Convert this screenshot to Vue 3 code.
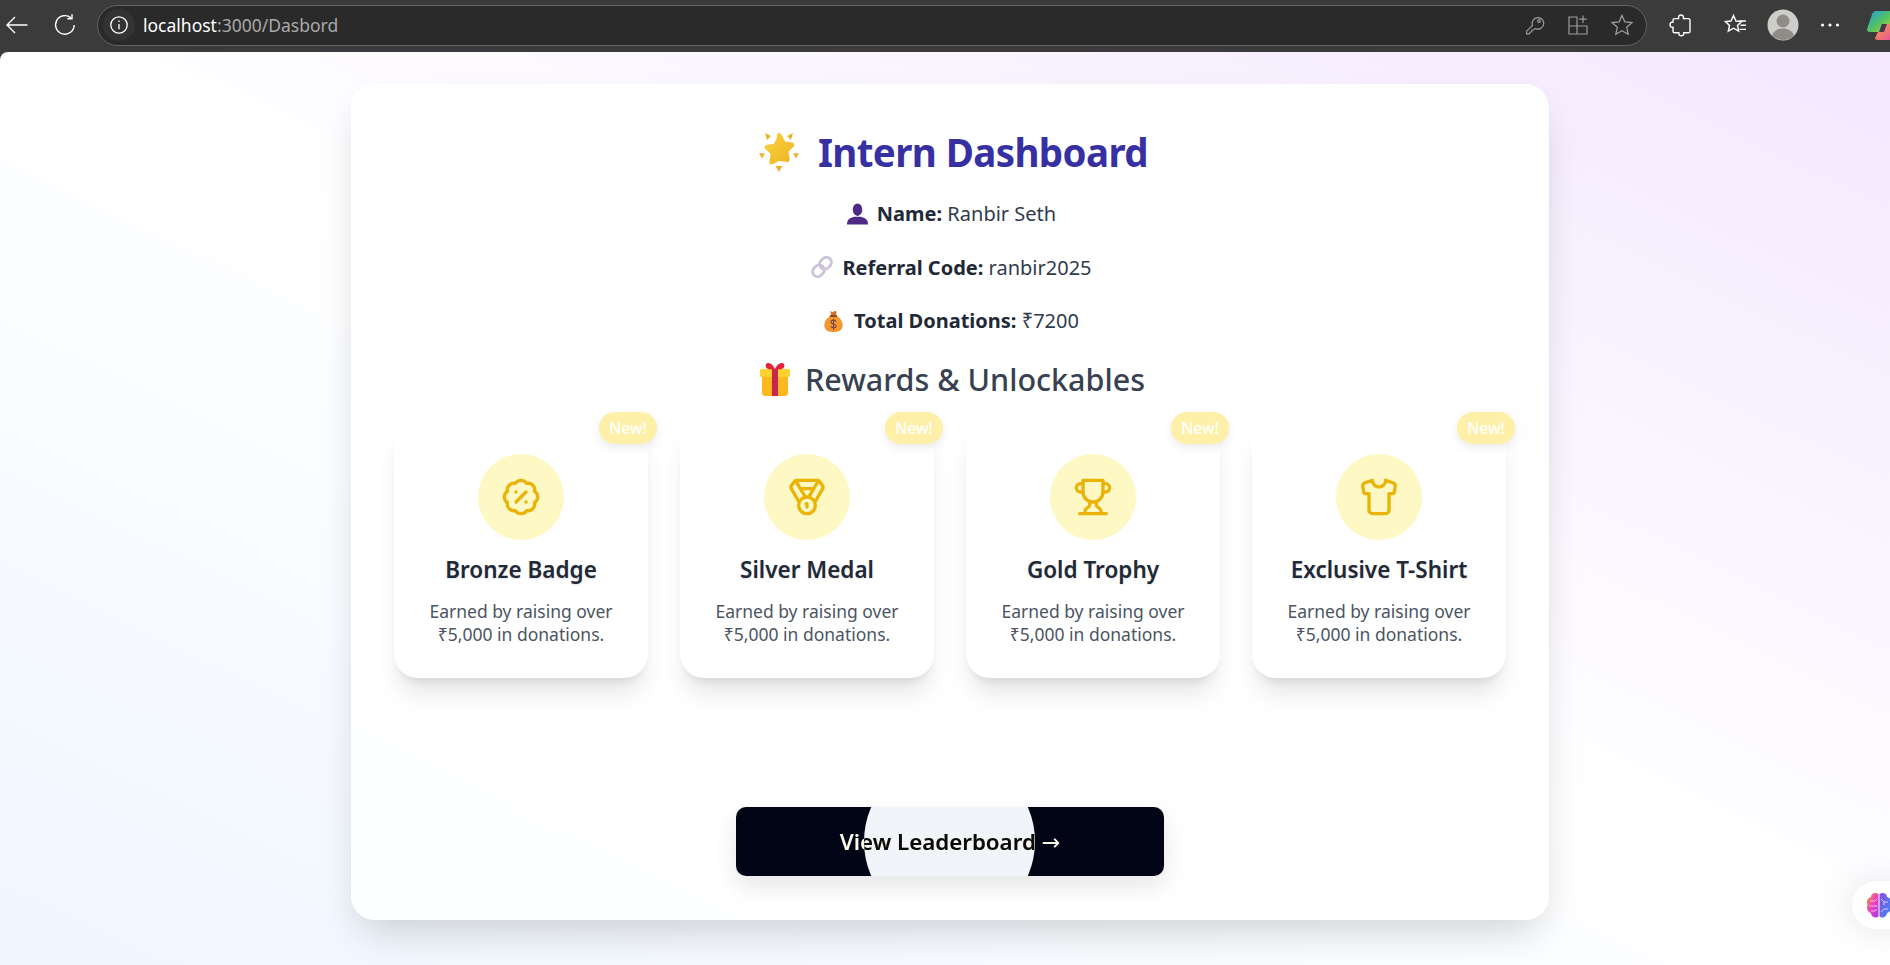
<script setup>
const rewards = [
  {
    title: 'Bronze Badge',
    paths: [
      'M3.85 8.62a4 4 0 0 1 4.78-4.77 4 4 0 0 1 6.74 0 4 4 0 0 1 4.78 4.78 4 4 0 0 1 0 6.74 4 4 0 0 1-4.77 4.78 4 4 0 0 1-6.75 0 4 4 0 0 1-4.78-4.77 4 4 0 0 1 0-6.76Z',
      'm15 9-6 6',
      'M9 9h.01',
      'M15 15h.01',
    ],
  },
  {
    title: 'Silver Medal',
    paths: [
      'M7.21 15 2.66 7.14a2 2 0 0 1 .13-2.2L4.4 2.8A2 2 0 0 1 6 2h12a2 2 0 0 1 1.6.8l1.6 2.14a2 2 0 0 1 .14 2.2L16.79 15',
      'M11 12 5.12 2.2',
      'm13 12 5.88-9.8',
      'M8 7h8',
      'M17 17a5 5 0 1 1-10 0 5 5 0 0 1 10 0Z',
      'M12 18v-2h-.5',
    ],
  },
  {
    title: 'Gold Trophy',
    paths: [
      'M6 9H4.5a2.5 2.5 0 0 1 0-5H6',
      'M18 9h1.5a2.5 2.5 0 0 0 0-5H18',
      'M4 22h16',
      'M10 14.66V17c0 .55-.47.98-.97 1.21C7.85 18.75 7 20.24 7 22',
      'M14 14.66V17c0 .55.47.98.97 1.21C16.15 18.75 17 20.24 17 22',
      'M18 2H6v7a6 6 0 0 0 12 0V2Z',
    ],
  },
  {
    title: 'Exclusive T-Shirt',
    paths: [
      'M20.38 3.46 16 2a4 4 0 0 1-8 0L3.62 3.46a2 2 0 0 0-1.34 2.23l.58 3.47a1 1 0 0 0 .99.84H6v10c0 1.1.9 2 2 2h8a2 2 0 0 0 2-2V10h2.15a1 1 0 0 0 .99-.84l.58-3.47a2 2 0 0 0-1.34-2.23z',
    ],
  },
]
</script>

<template>
  <div class="window">
    <header class="toolbar">
      <svg class="tb back" width="24" height="24" viewBox="0 0 24 24" fill="none" stroke="#fff" stroke-width="1.4">
        <path d="M22.5 12H2M10 4l-8 8 8 8" />
      </svg>
      <svg class="tb reload" width="24" height="24" viewBox="0 0 24 24" fill="none" stroke="#fff" stroke-width="1.4">
        <path d="M21.2 12a9.3 9.3 0 1 1-3.2-7.1" />
        <path d="M19 1.2v4.6h-4.6" />
      </svg>
      <div class="omnibox">
        <span class="site-info">
          <svg width="20" height="20" viewBox="0 0 20 20" fill="none" stroke="#fff" stroke-width="1.3">
            <circle cx="10" cy="10" r="8.2" />
            <path d="M10 9v5.2M10 5.6v1.4" />
          </svg>
        </span>
        <span class="url"><span class="host">localhost</span>:3000/Dasbord</span>
        <div class="omni-icons">
          <svg width="22" height="22" viewBox="0 0 22 22" fill="none" stroke="#9b9b9b" stroke-width="1.2">
            <path d="M8.5 11.3 2.6 17.2v2.6h2.8l.6-1.7 1.7-.3.3-1.7 1.7-.3 1.4-1.4a5.8 5.8 0 1 0-2.6-3.1Z" />
            <circle cx="15" cy="7" r="1.3" />
          </svg>
          <svg width="22" height="22" viewBox="0 0 22 22" fill="none" stroke="#9b9b9b" stroke-width="1.2">
            <path d="M2 3h8v17H2zM10 12h10v8H10zM2 12h8" />
            <path d="M16 1.5v7.5M12.2 5.2h7.6" />
          </svg>
          <svg width="24" height="24" viewBox="0 0 24 24" fill="none" stroke="#9b9b9b" stroke-width="1.3">
            <path d="m12 2.4 2.9 6.5 7.1.7-5.3 4.7 1.5 7-6.2-3.6-6.2 3.6 1.5-7L2 9.6l7.1-.7Z" />
          </svg>
        </div>
      </div>
      <svg class="tb ext" width="24" height="24" viewBox="0 0 24 24" fill="none" stroke="#fff" stroke-width="1.4">
        <path d="M9.6 5.6C9 3.400 10.300 2 12 2s3 1.400 2.400 3.600h5c.9 0 1.600.7 1.600 1.600v11c0 .9-.7 1.600-1.600 1.600h-4.600c.4 1.700-.9 3-2.500 3s-2.900-1.300-2.500-3H5.600c-.9 0-1.600-.7-1.600-1.600v-3.900c-1.900.3-3-1-3-2.600s1.100-2.900 3-2.600V7.200c0-.9.7-1.600 1.600-1.600Z" />
      </svg>
      <span class="divider"></span>
      <svg class="tb favs" width="24" height="24" viewBox="0 0 24 24" fill="none" stroke="#fff" stroke-width="1.4">
        <path d="m9.5 2.500 2.500 5.500 5.500.6-4 3.800 1.200 5.800-5.200-3-5.200 3 1.200-5.800-4-3.800L7 8Z" />
        <path d="M15 8h7M16.500 12.200H22M15.500 16.400H22" />
      </svg>
      <svg class="avatar" width="32" height="32" viewBox="0 0 32 32">
        <circle cx="16" cy="16" r="15.5" fill="#cfcdc9" />
        <circle cx="16" cy="12" r="6.5" fill="#8f8c88" />
        <path d="M5 26.500c2-5 6-7 11-7s9 2 11 7a15.500 15.500 0 0 1-22 0Z" fill="#8f8c88" />
      </svg>
      <svg class="dots" width="20" height="6" viewBox="0 0 20 6" fill="#fff">
        <circle cx="2.5" cy="3" r="1.6" />
        <circle cx="10" cy="3" r="1.6" />
        <circle cx="17.5" cy="3" r="1.6" />
      </svg>
      <svg class="copilot" width="26" height="29" viewBox="0 0 26 29">
        <defs>
          <linearGradient id="cpTop" x1="0" y1="0" x2="1" y2="1">
            <stop offset="0" stop-color="#1b9de8" />
            <stop offset=".55" stop-color="#58c45c" />
            <stop offset="1" stop-color="#e6c93a" />
          </linearGradient>
          <linearGradient id="cpLow" x1="0" y1="0" x2="1" y2="1">
            <stop offset="0" stop-color="#f6a33a" />
            <stop offset="1" stop-color="#e84fa0" />
          </linearGradient>
        </defs>
        <path d="M9 0h17v13H15l-3 8H2.500C.5 21-.5 19.500.2 17.500L5 3.500C5.800 1.200 7 0 9 0Z" fill="url(#cpTop)" />
        <path d="M15 13h11v16H11c-2 0-3-1-3-2l3-6h1Z" fill="url(#cpLow)" />
        <path d="M15 13h5l-3 8h-5Z" fill="#4a3550" />
      </svg>
    </header>

    <main class="page">
      <section class="panel">
        <h1 class="title">
          <svg class="emoji" width="40" height="40" viewBox="0 0 40 40">
            <defs>
              <linearGradient id="st" x1="0" y1="0" x2="1" y2="1">
                <stop offset="0" stop-color="#f8d53e" />
                <stop offset="1" stop-color="#eeb223" />
              </linearGradient>
            </defs>
            <path d="m6 1 6 3-4 4ZM34 1l-6 3 4 4ZM0 21l6 .5-3 5ZM40 21l-6 .5 3 5ZM20 40l-3.500-6h7Z" fill="#e9b32c" />
            <path d="M20 1c1.500 0 2.400 1 3 2.300l3 6.200 6.800 1c2.500.4 3.300 2.600 1.600 4.300l-5 5 1.300 7.300c.3 2.400-1.600 3.800-3.700 2.700L20 29l-6 3.100c-2.100 1.100-4-.3-3.700-2.700l1.300-7.300-5-5c-1.700-1.700-.9-3.900 1.600-4.300l6.800-1 3-6.200C17.600 2 18.500 1 20 1Z" fill="url(#st)" />
          </svg>
          <span>Intern Dashboard</span>
        </h1>
        <p class="info">
          <svg class="emoji" width="21" height="22" viewBox="0 0 22 22">
            <ellipse cx="11" cy="6.500" rx="5" ry="6.500" fill="#4e2a84" />
            <path d="M0 22c0-5 3-7 7.500-8h7c4.500 1 7.500 3 7.500 8Z" fill="#4e2a84" />
          </svg>
          <span><b>Name:</b> Ranbir Seth</span>
        </p>
        <p class="info">
          <svg class="emoji" width="22" height="22" viewBox="0 0 22 22" fill="none" stroke="#cbc3d9" stroke-width="2.8">
            <rect x="9.500" y="1" width="10" height="12.500" rx="5" transform="rotate(45 14.500 7.250)" />
            <rect x="2.500" y="8.500" width="10" height="12.500" rx="5" transform="rotate(45 7.500 14.750)" />
          </svg>
          <span><b>Referral Code:</b> ranbir2025</span>
        </p>
        <p class="info">
          <svg class="emoji bag" width="19" height="22" viewBox="0 0 20 24">
            <path d="M6 6.500C2.500 9 0 12.500 0 16.500 0 21.500 4 24 10 24s10-2.500 10-7.500c0-4-2.500-7.500-6-10Z" fill="#f2982e" />
            <path d="M6.500 1 9 2.500 11 1l2.500.5L12.500 6h-5Z" fill="#c9742a" />
            <rect x="6" y="5.500" width="8" height="2" rx="1" fill="#8f4a1e" />
            <path d="M12.800 12.500c-.4-1-1.400-1.500-2.800-1.500-1.700 0-2.800.8-2.800 2s1 1.800 2.800 2.200 2.800 1 2.800 2.200-1.100 2-2.800 2c-1.400 0-2.500-.6-2.900-1.600M10 9.500v12" fill="none" stroke="#7c3f52" stroke-width="1.2" />
          </svg>
          <span><b>Total Donations:</b> ₹7200</span>
        </p>
        <h2 class="subtitle">
          <svg class="emoji" width="30" height="33" viewBox="0 0 30 33">
            <path d="M2 11h26v19c0 1.700-1.300 3-3 3H5c-1.700 0-3-1.300-3-3Z" fill="#fbb81f" />
            <rect y="6" width="30" height="8" rx="1.500" fill="#fdd130" />
            <path d="M12 6h6v27h-6Z" fill="#c9264f" />
            <path d="M15 6C13 1.500 10 0 8 0 5.500 0 5 3 6.500 5c1 1.200 4 1.500 8.500 1Zm0 0c2-4.500 5-6 7-6 2.500 0 3 3 1.500 5-1 1.200-4 1.500-8.500 1Z" fill="#e5223c" />
          </svg>
          <span>Rewards &amp; Unlockables</span>
        </h2>

        <div class="rewards">
          <article v-for="r in rewards" :key="r.title" class="reward">
            <span class="badge">New!</span>
            <div class="circle">
              <svg width="40" height="40" viewBox="0 0 24 24" fill="none" stroke="#eab308" stroke-width="2" stroke-linecap="round" stroke-linejoin="round">
                <path v-for="d in r.paths" :key="d" :d="d" />
              </svg>
            </div>
            <h3>{{ r.title }}</h3>
            <p>Earned by raising over ₹5,000 in donations.</p>
          </article>
        </div>

        <div class="cta">
          <button class="leader">
            <span class="blob"></span>
            <span class="label">View Leaderboard <span class="arrow">→</span></span>
          </button>
        </div>
      </section>

      <div class="brain-bubble">
        <svg width="26" height="26" viewBox="0 0 26 26" fill="none">
          <defs>
            <linearGradient id="bl" x1="0" y1="0" x2="1" y2="1">
              <stop offset="0" stop-color="#f59e2c" />
              <stop offset=".5" stop-color="#ec3fc0" />
              <stop offset="1" stop-color="#a23be8" />
            </linearGradient>
            <linearGradient id="br" x1="0" y1="0" x2="1" y2="1">
              <stop offset="0" stop-color="#8b4de8" />
              <stop offset="1" stop-color="#3c8cf0" />
            </linearGradient>
          </defs>
          <path d="M12.500 2C9 0 5 1.500 5 5 1.500 6 0 9 1.500 13 0 16 1.500 20 5 21c0 3.500 4.500 6 7.500 3.500Z" fill="url(#bl)" />
          <path d="M13.500 2C17 0 21 1.500 21 5c3.500 1 5 4 3.500 8 1.500 3 0 7-3.500 8 0 3.500-4.500 6-7.500 3.500Z" fill="url(#br)" />
          <path d="M4 9h5l2-2M3.500 14h8M5 19h4l2-2M15 7l3 3v3M22 10h-4M15 20l3-3h4" stroke="#fff" stroke-opacity=".75" stroke-width=".9" />
        </svg>
      </div>
    </main>
  </div>
</template>

<style scoped>
.window {
  width: 1890px;
  height: 965px;
  display: flex;
  flex-direction: column;
  overflow: hidden;
  background: #3b3b3b;
  font-family: 'Noto Sans', 'Open Sans', sans-serif;
}
.toolbar {
  height: 52px;
  flex: none;
  padding-bottom: 2px;
  box-sizing: border-box;
  display: flex;
  align-items: center;
  background: #3b3b3b;
}
.tb {
  flex: none;
}
.back {
  margin-left: 5px;
}
.reload {
  margin-left: 24px;
}
.omnibox {
  width: 1550px;
  height: 41px;
  flex: none;
  margin-left: 20px;
  display: flex;
  align-items: center;
  background: #2a2a2a;
  border: 1px solid #626262;
  border-radius: 21px;
  box-sizing: border-box;
}
.site-info {
  width: 32px;
  height: 32px;
  margin-left: 5px;
  border-radius: 50%;
  background: #333;
  display: flex;
  align-items: center;
  justify-content: center;
}
.url {
  margin-left: 8px;
  font-size: 17.5px;
  color: #a9a9a9;
}
.host {
  color: #fff;
}
.omni-icons {
  margin-left: auto;
  margin-right: 12px;
  display: flex;
  align-items: center;
  gap: 21px;
}
.ext {
  margin-left: 22px;
}
.divider {
  width: 1px;
  height: 22px;
  margin-left: 14px;
  background: #5c5c5c;
}
.favs {
  margin-left: 17px;
}
.avatar {
  margin-left: 19px;
  flex: none;
}
.dots {
  margin-left: 21px;
  flex: none;
}
.copilot {
  margin-left: 27px;
  flex: none;
}
.page {
  position: relative;
  flex: 1;
  padding-left: 10px;
  box-sizing: border-box;
  display: flex;
  justify-content: center;
  align-items: flex-start;
  border-top-left-radius: 8px;
  background: linear-gradient(to top right, #eff6ff, #ffffff, #f3e8ff);
  overflow: hidden;
}
.panel {
  width: 1198px;
  height: 836px;
  margin-top: 32px;
  padding: 40px 43px 44px;
  box-sizing: border-box;
  background: rgba(255, 255, 255, 0.9);
  border-radius: 24px;
  box-shadow: 0 20px 40px -10px rgba(0, 0, 0, 0.18);
  text-align: center;
}
.title,
.subtitle,
.info {
  display: flex;
  align-items: center;
  justify-content: center;
  margin: 0;
}
.title {
  height: 56px;
  padding-left: 7px;
  gap: 19px;
  font-size: 38.5px;
  font-weight: 700;
  letter-spacing: -0.6px;
  color: #3730a3;
}
.info {
  height: 29px;
  padding-left: 3px;
  margin-bottom: 24.5px;
  gap: 9px;
  font-size: 20px;
  color: #303b4d;
}
.title + .info {
  margin-top: 19px;
}
.info b {
  font-weight: 700;
  color: #1f2937;
}
.bag {
  margin-right: 2px;
}
.subtitle {
  height: 42px;
  margin-top: -1.5px;
  padding-left: 5px;
  gap: 15px;
  font-size: 30.5px;
  font-weight: 500;
  color: #374151;
}
.rewards {
  display: grid;
  grid-template-columns: repeat(4, 254px);
  gap: 32px;
  margin-top: 20.5px;
}
.reward {
  position: relative;
  height: 257.5px;
  padding-top: 33px;
  box-sizing: border-box;
  background: #fff;
  border-radius: 24px;
  box-shadow: 0 20px 25px -5px rgba(0, 0, 0, 0.1), 0 8px 10px -6px rgba(0, 0, 0, 0.1);
}
.badge {
  position: absolute;
  top: -9px;
  right: -9px;
  width: 58px;
  height: 32px;
  line-height: 32px;
  border-radius: 16px;
  background: #fef0a8;
  color: #fff;
  font-size: 15.5px;
  font-weight: 500;
  box-shadow: 0 4px 10px rgba(0, 0, 0, 0.08);
}
.circle {
  width: 86px;
  height: 86px;
  margin: 0 auto;
  border-radius: 50%;
  background: #fdf8c4;
  display: flex;
  align-items: center;
  justify-content: center;
}
.reward h3 {
  margin: 14px 0 0;
  line-height: 32px;
  font-size: 22.5px;
  font-weight: 600;
  color: #1f2937;
  text-shadow: 0 1px 2px rgba(0, 0, 0, 0.12);
}
.reward p {
  margin: 14px 24px 0;
  line-height: 23px;
  font-size: 17.5px;
  color: #4b5563;
}
.cta {
  margin-top: 129px;
  display: flex;
  justify-content: center;
}
.leader {
  position: relative;
  width: 428px;
  height: 69px;
  padding: 0;
  border: none;
  border-radius: 10px;
  background: #020515;
  box-shadow: 0 10px 24px rgba(0, 0, 0, 0.1);
  font-family: inherit;
  overflow: hidden;
  isolation: isolate;
}
.blob {
  position: absolute;
  left: 128px;
  top: -51px;
  width: 171px;
  height: 171px;
  border-radius: 50%;
  background: #f1f5f9;
}
.label {
  position: relative;
  font-size: 22.3px;
  font-weight: 600;
  color: #fff;
  mix-blend-mode: difference;
}
.arrow {
  font-family: 'DejaVu Sans', sans-serif;
  font-weight: 400;
}
.brain-bubble {
  position: absolute;
  left: 1852px;
  top: 829px;
  width: 60px;
  height: 48px;
  border-radius: 24px;
  background: #fff;
  box-shadow: 0 0 36px rgba(0, 0, 0, 0.1);
  display: flex;
  align-items: center;
  padding-left: 14px;
  box-sizing: border-box;
}
</style>
